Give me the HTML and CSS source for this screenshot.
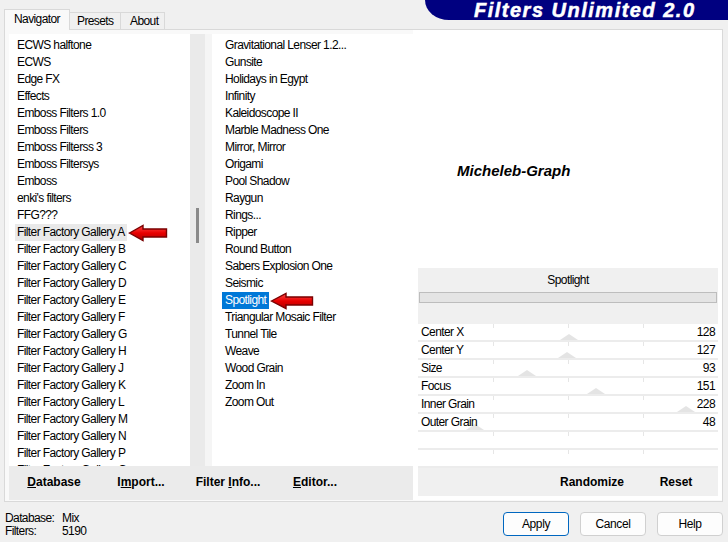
FILE: index.html
```html
<!DOCTYPE html>
<html>
<head>
<meta charset="utf-8">
<link rel="stylesheet" href="styles.css">
</head>
<body>
<div class="top">
  <div class="tabs">
    <div class="tab active">Navigator</div>
    <div class="tab presets">Presets</div>
    <div class="tab about">About</div>
  </div>
  <div class="banner">Filters Unlimited 2.0</div>
</div>
<div class="page">
  <div class="leftside">
    <div class="lists">
      <ul class="list cats">
        <li>ECWS halftone</li>
        <li>ECWS</li>
        <li>Edge FX</li>
        <li>Effects</li>
        <li>Emboss Filters 1.0</li>
        <li>Emboss Filters</li>
        <li>Emboss Filterss 3</li>
        <li>Emboss Filtersys</li>
        <li>Emboss</li>
        <li>enki's filters</li>
        <li>FFG???</li>
        <li><span class="sel-gray">Filter Factory Gallery A</span><svg class="arrow" width="40" height="18" viewBox="0 0 40 18"><defs><linearGradient id="rg1" x1="0" y1="0" x2="0" y2="1"><stop offset="0" stop-color="#ff4a4a"/><stop offset="0.5" stop-color="#e80000"/><stop offset="1" stop-color="#b00000"/></linearGradient></defs><path d="M1.5 9 L15 1.5 L15 5 L38.5 5 L38.5 13 L15 13 L15 16.5 Z" fill="url(#rg1)" stroke="#7a0000" stroke-width="1.4" stroke-linejoin="miter"/></svg></li>
        <li>Filter Factory Gallery B</li>
        <li>Filter Factory Gallery C</li>
        <li>Filter Factory Gallery D</li>
        <li>Filter Factory Gallery E</li>
        <li>Filter Factory Gallery F</li>
        <li>Filter Factory Gallery G</li>
        <li>Filter Factory Gallery H</li>
        <li>Filter Factory Gallery J</li>
        <li>Filter Factory Gallery K</li>
        <li>Filter Factory Gallery L</li>
        <li>Filter Factory Gallery M</li>
        <li>Filter Factory Gallery N</li>
        <li>Filter Factory Gallery P</li>
        <li>Filter Factory Gallery Q</li>
      </ul>
      <div class="scroll"><div class="thumb"></div></div>
      <div class="sep"></div>
      <ul class="list filters">
        <li>Gravitational Lenser 1.2...</li>
        <li>Gunsite</li>
        <li>Holidays in Egypt</li>
        <li>Infinity</li>
        <li>Kaleidoscope II</li>
        <li>Marble Madness One</li>
        <li>Mirror, Mirror</li>
        <li>Origami</li>
        <li>Pool Shadow</li>
        <li>Raygun</li>
        <li>Rings...</li>
        <li>Ripper</li>
        <li>Round Button</li>
        <li>Sabers Explosion One</li>
        <li>Seismic</li>
        <li><span class="sel-blue">Spotlight</span><svg class="arrow" width="44" height="18" viewBox="0 0 44 18"><defs><linearGradient id="rg2" x1="0" y1="0" x2="0" y2="1"><stop offset="0" stop-color="#ff4a4a"/><stop offset="0.5" stop-color="#e80000"/><stop offset="1" stop-color="#b00000"/></linearGradient></defs><path d="M1.5 9 L16 1.5 L16 5 L42.5 5 L42.5 13 L16 13 L16 16.5 Z" fill="url(#rg2)" stroke="#7a0000" stroke-width="1.4" stroke-linejoin="miter"/></svg></li>
        <li>Triangular Mosaic Filter</li>
        <li>Tunnel Tile</li>
        <li>Weave</li>
        <li>Wood Grain</li>
        <li>Zoom In</li>
        <li>Zoom Out</li>
      </ul>
    </div>
    <div class="navbar">
      <span class="bbtn"><u>D</u>atabase</span>
      <span class="bbtn">I<u>m</u>port...</span>
      <span class="bbtn">Filter <u>I</u>nfo...</span>
      <span class="bbtn"><u>E</u>ditor...</span>
    </div>
  </div>
  <div class="right">
    <div class="preview"><span class="sig">Micheleb-Graph</span></div>
    <div class="params">
      <div class="ptitle">Spotlight</div>
      <div class="progress"></div>
      <div class="pspace"></div>
      <div class="prow"><i class="mark" style="left:141.6px"></i><span class="pl">Center X</span><span class="pv">128</span></div>
      <div class="prow"><i class="mark" style="left:140.4px"></i><span class="pl">Center Y</span><span class="pv">127</span></div>
      <div class="prow"><i class="mark" style="left:100.4px"></i><span class="pl">Size</span><span class="pv">93</span></div>
      <div class="prow"><i class="mark" style="left:168.6px"></i><span class="pl">Focus</span><span class="pv">151</span></div>
      <div class="prow"><i class="mark" style="left:259.2px"></i><span class="pl">Inner Grain</span><span class="pv">228</span></div>
      <div class="prow"><i class="mark" style="left:47.5px"></i><span class="pl">Outer Grain</span><span class="pv">48</span></div>
      <div class="prow empty"></div>
      <div class="prow empty"></div>
      <div class="pbar">
        <span class="rbtn">Randomize</span>
        <span class="rbtn">Reset</span>
      </div>
    </div>
  </div>
</div>
<div class="footer">
  <div class="status">
    <span>Database:</span><span>Mix</span>
    <span>Filters:</span><span>5190</span>
  </div>
  <div class="buttons">
    <button class="btn primary">Apply</button>
    <button class="btn">Cancel</button>
    <button class="btn">Help</button>
  </div>
</div>
</body>
</html>
```
FILE: styles.css
```css
* { box-sizing: border-box; }
html, body { margin: 0; padding: 0; }
body {
  width: 728px;
  height: 542px;
  overflow: hidden;
  background: #f0f0f0;
  font-family: "Liberation Sans", Arial, sans-serif;
  font-size: 12px;
  letter-spacing: -0.6px;
  color: #000;
}

.top {
  height: 29px;
  display: flex;
  justify-content: space-between;
  align-items: flex-start;
}
.tabs {
  height: 29px;
  display: flex;
  align-items: flex-end;
  padding-left: 4px;
}
.tab {
  height: 17px;
  border: 1px solid #d9d9d9;
  border-bottom: none;
  background: #f0f0f0;
  line-height: 17px;
  margin-left: -1px;
}
.tab.active {
  height: 21px;
  width: 66px;
  margin-left: 0;
  margin-bottom: -1px;
  padding-left: 9px;
  line-height: 19px;
  background: #f9f9f9;
  position: relative;
  z-index: 1;
}
.tab.presets { width: 52px; padding-left: 7px; }
.tab.about { width: 45px; padding-left: 9px; }

.banner {
  width: 303px;
  height: 20px;
  background: #000080;
  border-bottom-left-radius: 24px 20px;
  color: #fff;
  font-weight: bold;
  font-style: italic;
  font-size: 20px;
  letter-spacing: 1.5px;
  line-height: 20px;
  padding-left: 49px;
  -webkit-text-stroke: 0.5px #fff;
  white-space: nowrap;
}

.page {
  margin-left: 4px;
  width: 719px;
  height: 473px;
  border: 1px solid #d9d9d9;
  background: #f9f9f9;
  display: flex;
}
.leftside {
  width: 408px;
  padding: 4px 0 0 4px;
  display: flex;
  flex-direction: column;
}
.lists {
  height: 432px;
  display: flex;
}
.list {
  list-style: none;
  margin: 0;
  padding: 3px 0 0 0;
  background: #fff;
  height: 100%;
  overflow: hidden;
}
.list li {
  height: 17px;
  line-height: 17px;
  white-space: nowrap;
  display: flex;
  align-items: center;
}
.cats { width: 181px; padding-left: 8px; }
.filters { width: 201px; padding-left: 13px; }
.sel-gray { background: #e9e9e9; padding: 0 2px; margin-left: -2px; }
.sel-blue { background: #0078d7; color: #fff; padding: 0 3px; margin-left: -3px; }
.arrow { flex: none; margin-left: 1px; }

.scroll {
  width: 15px;
  background: #eaeaea;
  position: relative;
}
.thumb {
  position: absolute;
  left: 6px;
  top: 174px;
  width: 3px;
  height: 35px;
  background: #8a8a8a;
}
.sep { width: 7px; background: #f5f5f5; }

.navbar {
  height: 34px;
  width: 404px;
  background: #ebebeb;
  display: flex;
  align-items: center;
  padding-left: 1.5px;
  padding-bottom: 3px;
}
.bbtn, .rbtn {
  font-weight: bold;
  font-size: 12px;
  letter-spacing: 0;
  text-align: center;
}
.bbtn { width: 87px; }

.right {
  width: 309px;
  height: 470px;
  background: #fff;
  display: flex;
  flex-direction: column;
}
.preview {
  height: 238px;
  padding: 132px 0 0 44px;
}
.sig {
  font-weight: bold;
  font-style: italic;
  font-size: 15px;
  letter-spacing: 0;
}
.params {
  margin: 0 4px 0 5px;
  background: #f0f0f0;
}
.ptitle {
  height: 22px;
  line-height: 25px;
  text-align: center;
}
.progress {
  margin: 2px 1px 0 1px;
  height: 11px;
  border: 1px solid #bdbdbd;
  background: #e4e4e4;
}
.pspace { height: 21px; }
.prow {
  position: relative;
  height: 18px;
  border-bottom: 2px solid #ececec;
  display: flex;
  justify-content: space-between;
  align-items: center;
  padding: 0 3px;
  background:
    linear-gradient(#e6e6e6, #e6e6e6) 75px 0 / 1px 4px no-repeat,
    linear-gradient(#e6e6e6, #e6e6e6) 150px 0 / 1px 4px no-repeat,
    linear-gradient(#e6e6e6, #e6e6e6) 225px 0 / 1px 4px no-repeat,
    #fff;
}
.pl, .pv { position: relative; line-height: 17px; }
.mark {
  position: absolute;
  bottom: 0;
  width: 0;
  height: 0;
  border-left: 9px solid transparent;
  border-right: 9px solid transparent;
  border-bottom: 6px solid #e4e4e4;
}
.pbar {
  height: 28px;
  display: flex;
  justify-content: flex-end;
  align-items: center;
}
.rbtn { width: 84px; }

.footer {
  height: 40px;
  display: flex;
  justify-content: space-between;
  align-items: flex-start;
}
.status {
  padding: 10px 0 0 5px;
  display: grid;
  grid-template-columns: 57px auto;
  line-height: 13px;
}
.buttons {
  display: flex;
  gap: 11px;
  padding-top: 10px;
  padding-right: 5px;
}
.btn {
  width: 66px;
  height: 24px;
  border: 1px solid #d0d0d0;
  border-radius: 4px;
  background: #fdfdfd;
  font-family: "Liberation Sans", Arial, sans-serif;
  font-size: 12px;
  letter-spacing: -0.4px;
  color: #000;
  padding: 0;
}
.btn.primary { border-color: #0067c0; }
```
